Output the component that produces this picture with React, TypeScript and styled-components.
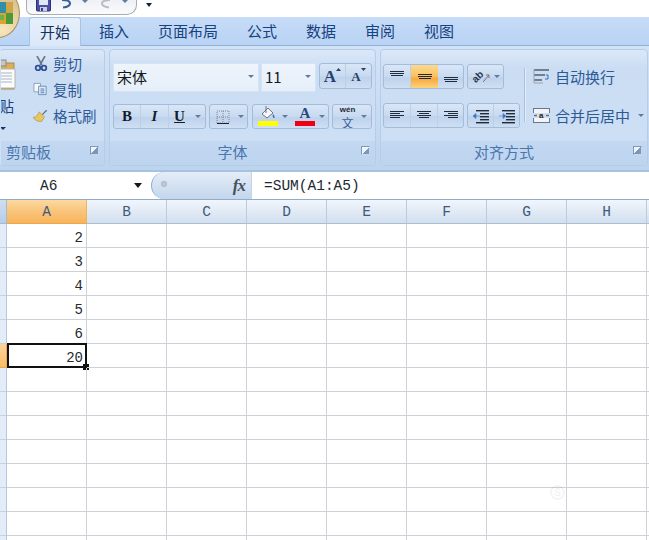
import { Fragment } from "react";
import styled, { createGlobalStyle } from "styled-components";

const GlobalStyle = createGlobalStyle`
  html, body { margin: 0; padding: 0; background: #fff; }
  body { font-family: "Noto Sans CJK SC", "Liberation Sans", sans-serif; }
  * { box-sizing: border-box; }
`;

// last column only peeks in at the right edge, so it has no visible letter
const COLUMNS = ["A", "B", "C", "D", "E", "F", "G", "H", ""];
const VALUES = ["2", "3", "4", "5", "6", "20"];
const TABS = ["开始", "插入", "页面布局", "公式", "数据", "审阅", "视图"];
const ROW_COUNT = 14;

const Page = styled.div`
  position: relative;
  width: 649px;
  height: 540px;
  overflow: hidden;
  background: #fff;
`;

/* ---------- top bar ---------- */
const TopBar = styled.div`
  height: 17px;
  display: flex;
  align-items: flex-start;
  padding-left: 26px;
  background: #fff;
`;

const QuickAccess = styled.div`
  width: 111px;
  height: 15px;
  display: flex;
  align-items: flex-start;
  gap: 9px;
  padding-left: 9px;
  background: linear-gradient(#eef1f5, #fafbfc);
  border: 1px solid #a9acb0;
  border-top: none;
  border-radius: 0 0 10px 6px;
`;

const QuickArrow = styled.div`
  margin: 3px 0 0 9px;
  width: 0;
  height: 0;
  border-left: 3px solid transparent;
  border-right: 3px solid transparent;
  border-top: 4px solid #10234a;
`;

const OfficeButton = styled.div`
  position: absolute;
  left: -24px;
  top: -12px;
  width: 44px;
  height: 50px;
  border-radius: 50%;
  border: 1px solid #a58d5e;
  background: radial-gradient(circle at 60% 85%, #f7e6bb, #d9c48f 65%, #b9a26c);
  display: flex;
  align-items: center;
  justify-content: flex-end;
  padding-right: 5px;
`;

/* ---------- tabs ---------- */
const TabRow = styled.div`
  height: 29px;
  display: flex;
  align-items: flex-end;
  padding-left: 29px;
  background: linear-gradient(#c6dcf8, #b9d3f4);
  border-bottom: 1px solid #8fb2dc;
`;

const Tab = styled.div<{ $active?: boolean }>`
  height: ${(p) => (p.$active ? "29px" : "28px")};
  line-height: 28px;
  font-size: 15px;
  color: #17417f;
  padding: 0 ${(p) => (p.$active ? "10px" : "14.5px")};
  margin-right: ${(p) => (p.$active ? "3.5px" : "0")};
  margin-bottom: ${(p) => (p.$active ? "-1px" : "0")};
  border-radius: 3px 3px 0 0;
  ${(p) =>
    p.$active &&
    `background: linear-gradient(#e6f0fc, #dbe8f8);
     border: 1px solid #a6c2e4;
     border-bottom: none;
     color: #14305c;`}
`;

/* ---------- ribbon ---------- */
const Ribbon = styled.div`
  height: 124px;
  display: flex;
  gap: 4px;
  padding: 3px 0 4px;
  background: linear-gradient(#d3e3f7, #bdd4ef);
`;

const Group = styled.section<{ $width: number; $clipped?: boolean }>`
  width: ${(p) => p.$width}px;
  height: 117px;
  flex: none;
  display: flex;
  flex-direction: column;
  border: 1px solid #b5cde9;
  border-left-color: ${(p) => (p.$clipped ? "transparent" : "#b5cde9")};
  border-radius: 4px;
  overflow: hidden;
  background: linear-gradient(#dbe8f8, #cbddf3 16%, #cddff4 80%, #d3e3f6);
`;

const GroupBody = styled.div`
  flex: 1;
  position: relative;
  display: flex;
`;

const GroupLabel = styled.div<{ $left?: boolean }>`
  height: 24px;
  flex: none;
  position: relative;
  display: flex;
  align-items: center;
  justify-content: ${(p) => (p.$left ? "flex-start" : "center")};
  padding: ${(p) => (p.$left ? "0 0 3px 5px" : "0 20px 3px 0")};
  font-size: 15px;
  color: #4a76ae;
  background: linear-gradient(#c3d8f1, #bdd4ef);
`;

const Launcher = styled.div`
  position: absolute;
  right: 5px;
  top: 5px;
  width: 9px;
  height: 9px;
  border: 1px solid #7d99bd;
  border-right-color: #c9d8ea;
  border-bottom-color: #c9d8ea;
  background: linear-gradient(135deg, #eef4fb 50%, #7f97b6 50%);
`;

/* clipboard */
const PasteColumn = styled.div`
  width: 25px;
  margin-left: -1px;
  display: flex;
  flex-direction: column;
  align-items: flex-start;
  padding-top: 8px;
  font-size: 15px;
  color: #17417f;
`;

const PasteWord = styled.span`
  margin-top: 6px;
  margin-left: -1px;
  line-height: 20px;
`;

const PasteArrow = styled.span`
  margin-top: 11px;
  width: 0;
  height: 0;
  border-left: 3px solid transparent;
  border-right: 3px solid transparent;
  border-top: 3px solid #17325c;
`;

const SmallArrow = styled.span<{ $gap?: number }>`
  display: inline-block;
  flex: none;
  width: 0;
  height: 0;
  margin-left: ${(p) => p.$gap ?? 0}px;
  border-left: 3px solid transparent;
  border-right: 3px solid transparent;
  border-top: 3px solid #5f7c9f;
`;

const ClipList = styled.div`
  margin-left: 8px;
  display: flex;
  flex-direction: column;
`;

const ClipItem = styled.div`
  height: 26px;
  display: flex;
  align-items: center;
  gap: 5px;
  font-size: 14.5px;
  color: #2c5a97;
  white-space: nowrap;
`;

const IconSlot = styled.span`
  width: 15px;
  height: 16px;
  flex: none;
  display: flex;
  align-items: center;
  justify-content: center;
`;

/* font group */
const Rows = styled.div`
  flex: 1;
  display: flex;
  flex-direction: column;
  padding: 13px 3px 0;
`;

const Row = styled.div<{ $gap?: number; $top?: number }>`
  display: flex;
  align-items: flex-start;
  gap: ${(p) => p.$gap ?? 3}px;
  margin-top: ${(p) => p.$top ?? 0}px;
`;

const Combo = styled.div<{ $width: number }>`
  width: ${(p) => p.$width}px;
  height: 29px;
  flex: none;
  display: flex;
  align-items: center;
  justify-content: space-between;
  padding: 0 4px 2px 3px;
  font-size: 15px;
  color: #15181d;
  background: linear-gradient(#eef4fc, #e6eff9);
  border: 1px solid #d5e3f4;
`;

const ButtonGroup = styled.div<{ $width: number; $height?: number; $shift?: number }>`
  width: ${(p) => p.$width}px;
  height: ${(p) => p.$height ?? 25}px;
  margin-left: ${(p) => p.$shift ?? 0}px;
  flex: none;
  display: flex;
  align-items: stretch;
  border: 1px solid #a3bcd9;
  border-radius: 3px;
  background: linear-gradient(#d9e6f7, #c8daf0 50%, #bdd2ec 55%, #cfdff3);
  overflow: hidden;
`;

const Cell = styled.div<{ $width?: number; $on?: boolean; $split?: boolean }>`
  ${(p) => (p.$width ? `width: ${p.$width}px; flex: none;` : "flex: 1;")}
  display: flex;
  align-items: center;
  justify-content: center;
  gap: 3px;
  ${(p) => p.$split && "border-right: 1px solid #bccfe6;"}
  ${(p) => p.$on && "background: linear-gradient(#fbd98f, #fbc365 45%, #f9a93f 60%, #fbd478);"}
`;

const FaceLetter = styled.span<{ $italic?: boolean; $under?: boolean }>`
  font-family: "Liberation Serif", serif;
  font-weight: 700;
  font-size: 15px;
  line-height: 15px;
  color: #141c2a;
  font-style: ${(p) => (p.$italic ? "italic" : "normal")};
  text-decoration: ${(p) => (p.$under ? "underline" : "none")};
`;

const GrowLetter = styled.span<{ $size: number }>`
  font-family: "Liberation Serif", serif;
  font-weight: 700;
  font-size: ${(p) => p.$size}px;
  line-height: 1;
  color: #23416b;
`;

const GrowMark = styled.svg`
  margin: -8px 0 0 -3px;
`;

const Swatch = styled.span<{ $color: string; $width: number }>`
  position: absolute;
  left: 50%;
  bottom: 2px;
  width: ${(p) => p.$width}px;
  height: 5px;
  margin-left: ${(p) => -p.$width / 2}px;
  background: ${(p) => p.$color};
`;

const SwatchCell = styled.span`
  position: relative;
  width: 22px;
  height: 23px;
  display: flex;
  justify-content: center;
  align-items: flex-start;
  padding-top: 1px;
`;

const ColorLetter = styled.span`
  font-family: "Liberation Serif", serif;
  font-weight: 700;
  font-size: 15px;
  line-height: 15px;
  color: #27497c;
`;

const PhoneticStack = styled.span`
  width: 20px;
  display: flex;
  flex-direction: column;
  align-items: center;
`;

const PhoneticTop = styled.span`
  font-family: "Liberation Sans", sans-serif;
  font-weight: 700;
  font-size: 8px;
  line-height: 8px;
  color: #1f2a3a;
`;

const PhoneticBase = styled.span`
  margin-top: 3px;
  font-size: 12px;
  line-height: 11px;
  color: #3a5f99;
`;

const OrientMark = styled.span`
  position: relative;
  width: 20px;
  height: 18px;
  display: flex;
  align-items: center;
  justify-content: center;
`;

const OrientLetters = styled.span`
  font-family: "Liberation Sans", sans-serif;
  font-weight: 700;
  font-size: 10px;
  line-height: 10px;
  color: #27364a;
  transform: translateX(-3px) rotate(-45deg);
`;

const OrientArrow = styled.svg`
  position: absolute;
  right: 0;
  top: 3px;
`;

/* alignment */
const AlignColumn = styled.div`
  display: flex;
  flex-direction: column;
  gap: 14px;
  padding: 14px 0 0 2px;
`;

const Separator = styled.div`
  width: 1px;
  height: 54px;
  margin: 18px 8px 0 4px;
  background: #aac1dc;
  box-shadow: 1px 0 0 #e3edf9;
`;

const WrapColumn = styled.div`
  display: flex;
  flex-direction: column;
  gap: 19px;
  padding-top: 16px;
`;

const WrapItem = styled.div`
  height: 20px;
  display: flex;
  align-items: center;
  gap: 5px;
  font-size: 15px;
  color: #2c5a97;
  white-space: nowrap;
`;

/* ---------- formula bar ---------- */
const FormulaBar = styled.div`
  height: 30px;
  display: flex;
  align-items: stretch;
  background: #fff;
  border-top: 2px solid #a9c2df;
  border-bottom: 1px solid #8faccc;
`;

const NameBox = styled.div`
  width: 151px;
  flex: none;
  display: flex;
  align-items: center;
  font-family: "Liberation Mono", monospace;
  font-size: 14.5px;
  color: #22282f;
  padding-left: 40px;
`;

const NameArrow = styled.span`
  margin-left: 77px;
  width: 0;
  height: 0;
  border-left: 4px solid transparent;
  border-right: 4px solid transparent;
  border-top: 5px solid #14181e;
`;

const FxPill = styled.div`
  width: 101px;
  flex: none;
  display: flex;
  align-items: center;
  justify-content: space-between;
  padding: 0 6px 0 9px;
  border-left: 1px solid #8faccc;
  border-right: 1px solid #c5d3e4;
  border-radius: 14px 0 0 14px;
  background: linear-gradient(#e4edf8, #c4d6ec);
`;

const PillDot = styled.span`
  width: 6px;
  height: 6px;
  margin-top: -4px;
  border-radius: 50%;
  background: radial-gradient(circle, #c9cfd6, #9fadbd);
`;

const FxText = styled.span`
  font-family: "Liberation Serif", serif;
  font-style: italic;
  font-weight: 700;
  font-size: 17px;
  color: #46525d;
  letter-spacing: -1px;
`;

const FormulaText = styled.div`
  flex: 1;
  padding-left: 12px;
  display: flex;
  align-items: center;
  font-family: "Liberation Mono", monospace;
  font-size: 14.5px;
  color: #22282f;
`;

/* ---------- sheet ---------- */
const Sheet = styled.div`
  display: grid;
  grid-template-columns: 7px repeat(9, 80px);
  grid-auto-rows: 24px;
`;

const Corner = styled.div`
  background: linear-gradient(#cfdff2, #b6cde8);
  border-right: 1px solid #9fb9d8;
  border-bottom: 1px solid #9fb9d8;
`;

const ColumnHead = styled.div<{ $on?: boolean }>`
  display: flex;
  align-items: center;
  justify-content: center;
  font-family: "Liberation Mono", monospace;
  font-size: 14.5px;
  color: #3e5a7c;
  border-right: 1px solid ${(p) => (p.$on ? "#f2b25a" : "#bccbdc")};
  border-bottom: 1px solid ${(p) => (p.$on ? "#f0a64b" : "#a9bdd4")};
  background: ${(p) =>
    p.$on
      ? "linear-gradient(#fcd9a0, #f9c47a 50%, #f7b45c)"
      : "linear-gradient(#f1f6fc, #e1eaf5 50%, #d3e0ef)"};
`;

const RowHead = styled.div<{ $on?: boolean }>`
  border-right: 1px solid ${(p) => (p.$on ? "#f0a64b" : "#b6c8dd")};
  border-bottom: 1px solid ${(p) => (p.$on ? "#f0a64b" : "#c2d2e4")};
  background: ${(p) =>
    p.$on ? "linear-gradient(#fcd59a, #f9bd68)" : "#e4ecf7"};
`;

const DataCell = styled.div`
  position: relative;
  display: flex;
  align-items: center;
  justify-content: flex-end;
  padding: 5px 3px 0 0;
  font-family: "Liberation Mono", monospace;
  font-size: 14px;
  color: #26292d;
  border-right: 1px solid #cdd2d8;
  border-bottom: 1px solid #cdd2d8;
`;

const Selection = styled.div`
  position: absolute;
  left: 0;
  top: -1px;
  right: -1px;
  bottom: -1px;
  border: 2px solid #111;
`;

const FillHandle = styled.div`
  position: absolute;
  right: -4px;
  bottom: -4px;
  width: 6px;
  height: 6px;
  background: #111;
`;

const Watermark = styled.div`
  position: absolute;
  left: 550px;
  top: 485px;
  width: 15px;
  height: 15px;
  border-radius: 50%;
  border: 2px solid rgba(120, 120, 120, 0.08);
  display: flex;
  align-items: center;
  justify-content: center;
  font: 700 10px "Liberation Sans", sans-serif;
  color: rgba(120, 120, 120, 0.1);
`;

/* ---------- drawings ---------- */
const LinesIcon = ({ widths, top = 4, anchor = "center" }: { widths: number[]; top?: number; anchor?: "left" | "center" | "right" }) => (
  <svg width="16" height="16" viewBox="0 0 16 16">
    {widths.map((w, i) => {
      const x = anchor === "left" ? 1 : anchor === "right" ? 15 - w : 8 - w / 2;
      return <rect key={i} x={x} y={top + i * 2} width={w} height="1" fill="#1f2a3a" />;
    })}
  </svg>
);

const IndentIcon = ({ flip }: { flip?: boolean }) => (
  <svg width="18" height="16" viewBox="0 0 18 16">
    {[2, 5, 8, 11, 14].map((y, i) => (
      <rect key={y} x={i === 0 || i === 4 ? 4 : 8} y={y} width={i === 0 || i === 4 ? 13 : 9} height="1.4" fill="#1f2a3a" />
    ))}
    <path d={flip ? "M1 8h4V5.5L8 8l-3 2.5V8" : "M8 8H4V5.5L1 8l3 2.5V8"} fill="#3b78c4" stroke="#3b78c4" strokeWidth="0.6" />
  </svg>
);

const App = () => (
  <Page>
    <GlobalStyle />
    <TopBar>
      <QuickAccess>
        <svg width="15" height="12" viewBox="0 0 15 12">
          <rect x="0.5" y="-4" width="14" height="15" rx="1" fill="#4a4fa8" stroke="#2b2f74" />
          <rect x="3" y="-4" width="9" height="9" fill="#dfe6f4" />
          <rect x="4" y="7" width="7" height="4" fill="#c7cde0" />
          <rect x="5" y="8" width="2" height="3" fill="#3a3f88" />
        </svg>
        <svg width="13" height="9" viewBox="0 0 13 9">
          <path d="M2 0c5 0 8 1 8 3.500C10 6 7 7 3 7.500" fill="none" stroke="#3b5f9c" strokeWidth="2.200" />
        </svg>
        <SmallArrow />
        <svg width="16" height="10" viewBox="0 0 16 10">
          <path d="M13 0C8 0 5 1 5 3.500 5 6 8 7 12 7.500" fill="none" stroke="#b9bcc2" strokeWidth="2" />
        </svg>
        <SmallArrow />
      </QuickAccess>
      <QuickArrow />
    </TopBar>
    <OfficeButton>
      <svg width="17" height="24" viewBox="0 0 17 24">
        <rect x="0" y="1" width="9" height="11" fill="#2f8fa8" />
        <rect x="9" y="1" width="7" height="11" fill="#cfa44a" />
        <rect x="0" y="12" width="9" height="11" fill="#d8a52f" />
        <rect x="9" y="12" width="7" height="11" fill="#4a9a3a" />
        <rect x="3" y="14" width="4" height="5" fill="#6fb04a" />
      </svg>
    </OfficeButton>

    <TabRow>
      {TABS.map((tab, i) => (
        <Tab key={tab} $active={i === 0}>{tab}</Tab>
      ))}
    </TabRow>

    <Ribbon>
      <Group $width={105} $clipped>
        <GroupBody>
          <PasteColumn>
            <svg width="16" height="32" viewBox="0 0 16 32">
              <rect x="-6" y="5" width="20" height="26" fill="#dcae55" stroke="#a98a4c" />
              <rect x="-4" y="2" width="10" height="6" fill="#c7c7c2" stroke="#8a8a84" />
              <path d="M-2 11h17v19H-2z" fill="#fbfbfb" stroke="#b4b4ae" />
              <path d="M0 15h12M0 18h12M0 21h12M0 24h12" stroke="#a9b5c6" />
            </svg>
            <PasteWord>贴</PasteWord>
            <PasteArrow />
          </PasteColumn>
          <ClipList>
            <ClipItem>
              <IconSlot>
                <svg width="14" height="15" viewBox="0 0 14 15">
                  <path d="M3 0l5 9M11 0L6 9" stroke="#6a7684" strokeWidth="1.600" />
                  <circle cx="4" cy="12" r="2.300" fill="none" stroke="#2e4f94" strokeWidth="1.800" />
                  <circle cx="10" cy="12" r="2.300" fill="none" stroke="#2e4f94" strokeWidth="1.800" />
                </svg>
              </IconSlot>
              剪切
            </ClipItem>
            <ClipItem>
              <IconSlot>
                <svg width="16" height="14" viewBox="0 0 16 14">
                  <path d="M1 1h7v9H1z" fill="#f4f7fb" stroke="#8d9fb6" />
                  <path d="M6 4h8v9H6z" fill="#dfeaf8" stroke="#6b8fbd" />
                  <path d="M8 7h4M8 9h4M8 11h4" stroke="#4f78b0" />
                </svg>
              </IconSlot>
              复制
            </ClipItem>
            <ClipItem>
              <IconSlot>
                <svg width="17" height="15" viewBox="0 0 17 15">
                  <path d="M10 6l5-5 1 1-5 5z" fill="#5b6f8c" />
                  <path d="M7 3.500l6 5.500-3 5C7 15 2 13 0 9.500c3 .5 5-1.500 7-6z" fill="#eac75e" stroke="#a88c3e" strokeWidth="0.700" />
                </svg>
              </IconSlot>
              格式刷
            </ClipItem>
          </ClipList>
        </GroupBody>
        <GroupLabel $left>
          剪贴板
          <Launcher />
        </GroupLabel>
      </Group>

      <Group $width={267}>
        <GroupBody>
          <Rows>
            <Row $gap={2}>
              <Combo $width={146}>
                宋体
                <SmallArrow />
              </Combo>
              <Combo $width={55}>
                11
                <SmallArrow />
              </Combo>
              <ButtonGroup $width={53} $height={26} $shift={1}>
                <Cell $split>
                  <GrowLetter $size={17}>A</GrowLetter>
                  <GrowMark width="5" height="8" viewBox="0 0 5 8">
                    <path d="M0 3l2.500-3L5 3z" fill="#23416b" />
                  </GrowMark>
                </Cell>
                <Cell>
                  <GrowLetter $size={13}>A</GrowLetter>
                  <GrowMark width="5" height="8" viewBox="0 0 5 8">
                    <path d="M0 0l2.500 3L5 0z" fill="#23416b" />
                  </GrowMark>
                </Cell>
              </ButtonGroup>
            </Row>
            <Row $top={12} $gap={3}>
              <ButtonGroup $width={93}>
                <Cell $width={27} $split><FaceLetter>B</FaceLetter></Cell>
                <Cell $width={28} $split><FaceLetter $italic>I</FaceLetter></Cell>
                <Cell $width={21}><FaceLetter $under>U</FaceLetter></Cell>
                <Cell><SmallArrow /></Cell>
              </ButtonGroup>
              <ButtonGroup $width={39}>
                <Cell $width={25}>
                  <svg width="14" height="14" viewBox="0 0 14 14">
                    <path d="M1 1h12v12H1zM7 1v12M1 7h12" fill="none" stroke="#7a8797" strokeDasharray="1 1" />
                    <path d="M1 13.500h12" stroke="#222" />
                  </svg>
                </Cell>
                <Cell><SmallArrow /></Cell>
              </ButtonGroup>
              <ButtonGroup $width={77} $shift={1}>
                <Cell $width={38}>
                  <SwatchCell>
                    <svg width="18" height="15" viewBox="0 0 18 15">
                      <path d="M3 8l6-6 5 5-6 5z" fill="#f6f7f9" stroke="#6f7680" />
                      <path d="M7 0v7" stroke="#6f7680" />
                      <path d="M14 8c2 2 2 4 1 4s-2-2-1-4z" fill="#3c6fb4" />
                    </svg>
                    <Swatch $color="#ffff00" $width={20} />
                  </SwatchCell>
                  <SmallArrow />
                </Cell>
                <Cell>
                  <SwatchCell>
                    <ColorLetter>A</ColorLetter>
                    <Swatch $color="#f00010" $width={20} />
                  </SwatchCell>
                  <SmallArrow />
                </Cell>
              </ButtonGroup>
              <ButtonGroup $width={40}>
                <Cell>
                  <PhoneticStack>
                    <PhoneticTop>wén</PhoneticTop>
                    <PhoneticBase>文</PhoneticBase>
                  </PhoneticStack>
                  <SmallArrow />
                </Cell>
              </ButtonGroup>
            </Row>
          </Rows>
        </GroupBody>
        <GroupLabel>
          字体
          <Launcher />
        </GroupLabel>
      </Group>

      <Group $width={268}>
        <GroupBody>
          <AlignColumn>
            <Row>
              <ButtonGroup $width={81}>
                <Cell $width={27} $split><LinesIcon widths={[14, 14, 12]} top={2} /></Cell>
                <Cell $width={27} $on><LinesIcon widths={[14, 14, 12]} top={5} /></Cell>
                <Cell><LinesIcon widths={[14, 14, 12]} top={8} /></Cell>
              </ButtonGroup>
              <ButtonGroup $width={37}>
                <Cell>
                  <OrientMark>
                    <OrientLetters>ab</OrientLetters>
                    <OrientArrow width="8" height="12" viewBox="0 0 8 12">
                      <path d="M0 11l6-7M6 4H3M6 4v3" stroke="#8a6a6a" fill="none" />
                    </OrientArrow>
                  </OrientMark>
                  <SmallArrow />
                </Cell>
              </ButtonGroup>
            </Row>
            <Row>
              <ButtonGroup $width={81}>
                <Cell $width={27} $split><LinesIcon widths={[14, 10, 14, 10]} top={3} anchor="left" /></Cell>
                <Cell $width={27} $split><LinesIcon widths={[14, 10, 14, 10]} top={3} /></Cell>
                <Cell><LinesIcon widths={[14, 10, 14, 10]} top={3} anchor="right" /></Cell>
              </ButtonGroup>
              <ButtonGroup $width={53}>
                <Cell $split><IndentIcon /></Cell>
                <Cell><IndentIcon flip /></Cell>
              </ButtonGroup>
            </Row>
          </AlignColumn>
          <Separator />
          <WrapColumn>
            <WrapItem>
              <svg width="17" height="15" viewBox="0 0 17 15">
                <path d="M1 1h15M1 6h11M1 11h8" stroke="#55606e" strokeWidth="1.500" />
                <path d="M1 0v14h9" fill="none" stroke="#9aa4b0" />
                <path d="M13 6h2v4h-3" fill="none" stroke="#3a6fb0" />
              </svg>
              自动换行
            </WrapItem>
            <WrapItem>
              <svg width="17" height="15" viewBox="0 0 17 15">
                <rect x="0.500" y="0.500" width="16" height="14" fill="#f1f4f8" stroke="#6d7886" />
                <rect x="0" y="5" width="17" height="5" fill="#d8dde4" />
                <path d="M1 7.500h3M13 7.500h3" stroke="#3b78c4" strokeWidth="1.300" />
                <text x="6" y="10" fontFamily="Liberation Sans, sans-serif" fontSize="8" fontWeight="700" fill="#222">a</text>
              </svg>
              合并后居中
              <SmallArrow $gap={3} />
            </WrapItem>
          </WrapColumn>
        </GroupBody>
        <GroupLabel>
          对齐方式
          <Launcher />
        </GroupLabel>
      </Group>
    </Ribbon>

    <FormulaBar>
      <NameBox>
        A6
        <NameArrow />
      </NameBox>
      <FxPill>
        <PillDot />
        <FxText>fx</FxText>
      </FxPill>
      <FormulaText>=SUM(A1:A5)</FormulaText>
    </FormulaBar>

    <Sheet>
      <Corner />
      {COLUMNS.map((col, i) => (
        <ColumnHead key={i} $on={i === 0}>{col}</ColumnHead>
      ))}
      {Array.from({ length: ROW_COUNT }).map((_, row) => (
        <Fragment key={row}>
          <RowHead $on={row === 5} />
          {COLUMNS.map((_col, c) => (
            <DataCell key={c}>
              {c === 0 ? VALUES[row] : null}
              {c === 0 && row === 5 && (
                <Selection>
                  <FillHandle />
                </Selection>
              )}
            </DataCell>
          ))}
        </Fragment>
      ))}
    </Sheet>

    <Watermark>S</Watermark>
  </Page>
);

export default App;
